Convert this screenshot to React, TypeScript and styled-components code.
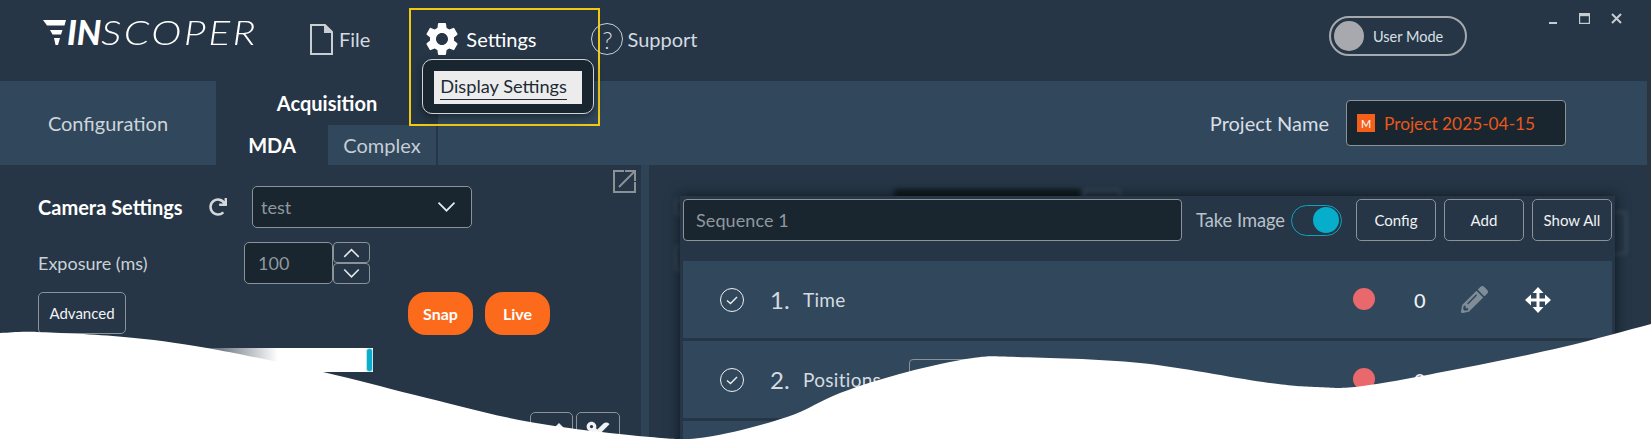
import * as React from "react";
import styled, { createGlobalStyle } from "styled-components";
import { FaPencilAlt, FaCut, FaArrowUp, FaRedo } from "react-icons/fa";
import { MdSettings } from "react-icons/md";

const Global = createGlobalStyle`
  html, body {
    margin: 0;
    padding: 0;
    background: #fff;
  }
  * {
    box-sizing: border-box;
  }
`;

const Frame = styled.div`
  position: relative;
  width: 1651px;
  height: 439px;
  overflow: hidden;
  background: #263646;
  color: #e4e8ec;
  font-family: Lato, "Liberation Sans", sans-serif;
  display: flex;
  flex-direction: column;
`;

const TitleBar = styled.div`
  height: 81px;
  flex: none;
  display: flex;
  align-items: center;
  padding-left: 43px;
`;

const Logo = styled.div`
  width: 214px;
  display: flex;
  align-items: center;
  margin-top: -17px;
  font-style: italic;
  font-size: 34px;
  line-height: 34px;
  color: #fff;
  svg {
    flex: none;
    margin-right: 1px;
  }
`;

const LogoBold = styled.span`
  font-weight: 900;
`;

const LogoThin = styled.span`
  display: inline-block;
  font-weight: 300;
  letter-spacing: 2px;
  transform: scaleX(1.2);
  transform-origin: left center;
`;

const NavItem = styled.div<{ $left: number; $gap: number; $bright?: boolean }>`
  position: relative;
  display: flex;
  align-items: center;
  gap: ${(p) => p.$gap}px;
  margin-left: ${(p) => p.$left}px;
  font-size: 20px;
  color: ${(p) => (p.$bright ? "#fff" : "#d4dae0")};
  margin-top: -3px;
`;

const HelpCircle = styled.span`
  width: 32px;
  height: 32px;
  border: 1px solid #c9d0d6;
  border-radius: 50%;
  display: flex;
  align-items: center;
  justify-content: center;
  font-size: 24px;
  font-weight: 300;
`;

const Highlight = styled.div`
  position: absolute;
  left: -13px;
  top: -11px;
  width: 191px;
  height: 118px;
  border: 2px solid #f0c913;
  pointer-events: none;
`;

const Dropdown = styled.div`
  position: absolute;
  left: 0;
  top: 40px;
  width: 172px;
  height: 55px;
  padding: 11px;
  background: #19252f;
  border: 1px solid #cfd4d8;
  border-radius: 10px;
  box-shadow: 0 3px 8px rgba(0, 0, 0, 0.45);
`;

const DropdownItem = styled.div`
  height: 33px;
  background: #ececec;
  color: #1d2a36;
  font-size: 18.2px;
  line-height: 30px;
  padding: 0 0 0 6px;
  span {
    display: inline-block;
    line-height: 26px;
    margin-top: 1px;
    border-bottom: 1px solid #1d2a36;
  }
`;

const UserMode = styled.div`
  width: 138px;
  height: 40px;
  margin-left: auto;
  margin-right: 184px;
  margin-top: -9px;
  border: 2px solid #a5a9ae;
  border-radius: 20px;
  display: flex;
  align-items: center;
  gap: 9px;
  padding-left: 3px;
  font-size: 14.5px;
  color: #d7e0e8;
`;

const UserKnob = styled.span`
  width: 30px;
  height: 30px;
  border-radius: 50%;
  background: #a8a9ae;
`;

const WindowControls = styled.div`
  position: absolute;
  top: 13px;
  right: 29px;
  display: flex;
  align-items: flex-start;
  gap: 21px;
  svg {
    display: block;
  }
`;

const TabBar = styled.div`
  height: 84px;
  flex: none;
  background: #31475b;
  display: flex;
`;

const ConfigTab = styled.div`
  width: 216px;
  display: flex;
  align-items: center;
  justify-content: center;
  font-size: 20px;
  color: #cdd5dc;
`;

const AcquisitionBlock = styled.div`
  width: 222px;
  background: #263646;
  display: flex;
  flex-direction: column;
`;

const AcquisitionTitle = styled.div`
  height: 44px;
  padding: 10px 0 0 0;
  text-align: center;
  font-size: 20px;
  font-weight: 700;
  color: #fff;
`;

const SubTabs = styled.div`
  height: 40px;
  display: flex;
`;

const SubTab = styled.div<{ $active?: boolean; $width: number }>`
  width: ${(p) => p.$width}px;
  display: flex;
  align-items: center;
  justify-content: center;
  font-size: 20px;
  font-weight: ${(p) => (p.$active ? 700 : 400)};
  color: ${(p) => (p.$active ? "#fff" : "#c5ced6")};
  background: ${(p) => (p.$active ? "transparent" : "#31475b")};
`;

const ProjectArea = styled.div`
  margin-left: auto;
  padding-right: 85px;
  display: flex;
  align-items: center;
  gap: 17px;
  font-size: 20px;
  color: #d7dfe6;
`;

const ProjectInput = styled.div`
  width: 220px;
  height: 46px;
  background: #19252f;
  border: 1px solid #8b9298;
  border-radius: 4px;
  display: flex;
  align-items: center;
  gap: 9px;
  padding-left: 10px;
  color: #e8581a;
  font-size: 17.3px;
`;

const ProjectBadge = styled.span`
  width: 18px;
  height: 18px;
  background: #f4601a;
  color: #fff;
  font-size: 11px;
  display: flex;
  align-items: center;
  justify-content: center;
`;

const Body = styled.div`
  flex: 1;
  display: flex;
`;

const LeftPanel = styled.div`
  position: relative;
  width: 641px;
  padding: 21px 0 0 38px;
`;

const ExpandButton = styled.div`
  position: absolute;
  top: 5px;
  right: 5px;
  svg {
    display: block;
  }
`;

const CameraRow = styled.div`
  height: 42px;
  display: flex;
  align-items: center;
`;

const SectionTitle = styled.div`
  width: 171px;
  font-size: 20px;
  font-weight: 700;
  color: #fff;
`;

const RefreshIcon = styled.span`
  display: flex;
  width: 43px;
  color: #d4d8dc;
  font-size: 18px;
`;

const SelectBox = styled.div`
  width: 220px;
  height: 42px;
  background: #19252f;
  border: 1px solid #8b9298;
  border-radius: 5px;
  display: flex;
  align-items: center;
  justify-content: space-between;
  padding: 0 14px 0 8px;
  color: #8f989f;
  font-size: 18px;
`;

const ExposureRow = styled.div`
  height: 42px;
  margin-top: 14px;
  display: flex;
  align-items: center;
`;

const FieldLabel = styled.div`
  width: 206px;
  font-size: 18px;
  color: #c9d1d8;
`;

const NumberBox = styled.div`
  width: 89px;
  height: 42px;
  background: #19252f;
  border: 1px solid #8b9298;
  border-radius: 5px;
  display: flex;
  align-items: center;
  padding-left: 13px;
  color: #8f989f;
  font-size: 18px;
`;

const Stepper = styled.div`
  width: 37px;
  height: 42px;
  display: flex;
  flex-direction: column;
`;

const StepButton = styled.div`
  flex: 1;
  border: 1px solid #8b9298;
  border-radius: 4px;
  display: flex;
  align-items: center;
  justify-content: center;
`;

const ActionRow = styled.div`
  height: 43px;
  margin-top: 8px;
  display: flex;
`;

const OutlineButton = styled.div<{ $width: number }>`
  width: ${(p) => p.$width}px;
  height: 42px;
  flex: none;
  border: 1px solid #8b9298;
  border-radius: 5px;
  display: flex;
  align-items: center;
  justify-content: center;
  color: #f0f2f4;
  font-size: 15px;
`;

const SnapGroup = styled.div`
  display: flex;
  gap: 12px;
  margin-left: 282px;
`;

const OrangeButton = styled.div`
  width: 65px;
  height: 43px;
  border-radius: 18px;
  background: #fc6a1c;
  color: #fff;
  font-weight: 700;
  font-size: 16px;
  display: flex;
  align-items: center;
  justify-content: center;
`;

const LevelRow = styled.div`
  position: relative;
  height: 24px;
  margin: 13px 0 0 152px;
  width: 183px;
  background: linear-gradient(90deg, rgba(255, 255, 255, 0), #fff 48%);
`;

const LevelHandle = styled.span`
  position: absolute;
  right: 0;
  top: 0;
  width: 7px;
  height: 24px;
  background: #08aecb;
  border: 1px solid #bfe6ee;
  border-radius: 3px;
`;

const ToolRow = styled.div`
  display: flex;
  gap: 3px;
  margin: 40px 0 0 492px;
`;

const ToolGlyph = styled.span`
  display: flex;
  margin-left: 14px;
  font-size: 22px;
`;

const Divider = styled.div`
  width: 8px;
  background: #2e4356;
`;

const RightPanel = styled.div`
  position: relative;
  flex: 1;
  padding: 31px 0 0 31px;
`;

// dim, out of focus window that lies behind the sequence panel
const GhostBox = styled.div<{ $x: number; $y: number; $w: number; $h: number; $dark?: boolean }>`
  position: absolute;
  left: ${(p) => p.$x}px;
  top: ${(p) => p.$y}px;
  width: ${(p) => p.$w}px;
  height: ${(p) => p.$h}px;
  background: ${(p) => (p.$dark ? "#10191f" : "transparent")};
  border: ${(p) => (p.$dark ? "none" : "2px solid #42505c")};
  border-radius: 4px;
  filter: blur(2px);
`;

const SequencePanel = styled.div`
  position: relative;
  width: 935px;
  padding: 3px 3px 0;
  background: #263646;
  box-shadow: 0 0 12px rgba(8, 14, 20, 0.8);
`;

const SequenceHeader = styled.div`
  display: flex;
  align-items: center;
  height: 42px;
  margin-bottom: 20px;
`;

const SequenceInput = styled.div`
  width: 499px;
  height: 42px;
  background: #19252f;
  border: 1px solid #8b9298;
  border-radius: 4px;
  display: flex;
  align-items: center;
  padding-left: 12px;
  color: #8f989f;
  font-size: 18px;
  letter-spacing: 0.1px;
`;

const TakeLabel = styled.div`
  margin-left: 14px;
  width: 95px;
  font-size: 18.3px;
  color: #b9c2ca;
`;

const Toggle = styled.div`
  width: 51px;
  height: 31px;
  border: 1px solid #08a5c0;
  border-radius: 16px;
  display: flex;
  justify-content: flex-end;
  align-items: center;
  padding-right: 2px;
  margin-right: 14px;
`;

const ToggleKnob = styled.span`
  width: 26px;
  height: 26px;
  border-radius: 50%;
  background: #06aecb;
`;

const HeaderButtons = styled.div`
  display: flex;
  gap: 8px;
`;

const StepList = styled.div`
  display: flex;
  flex-direction: column;
  gap: 3px;
`;

const StepRow = styled.div`
  height: 77px;
  background: #31475b;
  display: flex;
  align-items: center;
  padding-left: 37px;
  color: #d5dbe0;
`;

const StepNumber = styled.span`
  margin-left: 26px;
  width: 33px;
  font-size: 24px;
`;

const StepName = styled.span`
  width: 550px;
  font-size: 19px;
  letter-spacing: 0.3px;
`;

const StatusDot = styled.span`
  width: 22px;
  height: 22px;
  border-radius: 50%;
  background: #e9686b;
  margin-left: auto;
  position: relative;
  top: -1px;
`;

const StepCount = styled.span`
  width: 12px;
  margin-left: 39px;
  font-size: 20px;
  font-weight: 500;
  color: #eef1f3;
`;

const PencilIcon = styled.span`
  display: flex;
  margin-left: 35px;
  color: #7f8d98;
  font-size: 27px;
`;

const MoveIcon = styled.span`
  display: flex;
  margin-left: 37px;
  margin-right: 61px;
`;

const PositionField = styled.div`
  position: absolute;
  left: 260px;
  top: 194px;
  width: 80px;
  height: 42px;
  border: 1px solid #8b9298;
  border-radius: 4px;
`;

const EdgeStrip = styled.div`
  position: absolute;
  right: 0;
  top: 10px;
  bottom: 0;
  width: 4px;
  background: #2a3540;
`;

const Wave = styled.svg`
  position: absolute;
  left: 0;
  top: 0;
  width: 1651px;
  height: 439px;
  pointer-events: none;
`;

const Chevron = ({ up, size = 18 }: { up?: boolean; size?: number }) => (
  <svg width={size} height={size * 0.6} viewBox="0 0 18 11" fill="none" stroke="#e6e9ec" strokeWidth="1.5">
    <path d={up ? "M2 9.5 9 2.5l7 7" : "M2 1.5l7 7 7-7"} />
  </svg>
);

const CheckCircle = () => (
  <svg width="24" height="24" viewBox="0 0 24 24" fill="none" stroke="#eef1f3" strokeWidth="1">
    <circle cx="12" cy="12" r="11.500" />
    <path d="M7 12.500l3.500 3L17 9" strokeWidth="1.400" />
  </svg>
);

const MoveGlyph = () => (
  <svg width="26" height="26" viewBox="0 0 26 26" fill="#fff">
    <path d="M11.500 4h3v7.500H22v3h-7.500V22h-3v-7.500H4v-3h7.500z" />
    <path d="M13 0l5.500 6h-11zM13 26l-5.500-6h11zM0 13l6-5.500v11zM26 13l-6 5.500v-11z" />
  </svg>
);

// outline of the white torn edge, joined smoothly through these points
const waveEdge: [number, number][] = [
  [-40, 334], [0, 333], [37, 332], [124, 337], [207, 348], [323, 372], [415, 395], [530, 422],
  [650, 437], [707, 437], [787, 417], [840, 393], [907, 372], [973, 358], [1017, 357],
  [1140, 363], [1263, 382], [1317, 387], [1363, 386], [1463, 368], [1563, 347], [1651, 324], [1700, 311],
];

const wavePath = () => {
  let d = `M${waveEdge[0][0]} ${waveEdge[0][1]}`;
  for (let i = 0; i < waveEdge.length - 1; i++) {
    const p0 = waveEdge[Math.max(i - 1, 0)];
    const p1 = waveEdge[i];
    const p2 = waveEdge[i + 1];
    const p3 = waveEdge[Math.min(i + 2, waveEdge.length - 1)];
    const c1 = [p1[0] + (p2[0] - p0[0]) / 6, p1[1] + (p2[1] - p0[1]) / 6];
    const c2 = [p2[0] - (p3[0] - p1[0]) / 6, p2[1] - (p3[1] - p1[1]) / 6];
    d += `C${c1[0]} ${c1[1]} ${c2[0]} ${c2[1]} ${p2[0]} ${p2[1]}`;
  }
  return d + "V460H-40Z";
};

const sequenceSteps = ["Time", "Positions"];

export default function App() {
  return (
    <Frame>
      <Global />
      <TitleBar>
        <Logo>
          <svg width="23" height="25" viewBox="0 0 23 25" fill="#fff">
            <path d="M0 0h23l-1.500 5.500H4z" />
            <path d="M7 10h12.500l-1.500 4.500H9.500z" />
            <path d="M11 18h6l-2 7h-2.500z" />
          </svg>
          <LogoBold>IN</LogoBold>
          <LogoThin>SCOPER</LogoThin>
        </Logo>
        <NavItem $left={53} $gap={6}>
          <svg width="23" height="31" viewBox="0 0 23 31" fill="none" stroke="#c9ced3" strokeWidth="2">
            <path d="M1 1h14l7 7v22H1z" />
            <path d="M15 1v7h7" fill="#c9ced3" />
          </svg>
          File
        </NavItem>
        <NavItem $left={52} $gap={4} $bright>
          <MdSettings size={40} color="#fff" />
          Settings
          <Highlight />
          <Dropdown>
            <DropdownItem>
              <span>Display Settings</span>
            </DropdownItem>
          </Dropdown>
        </NavItem>
        <NavItem $left={55} $gap={4}>
          <HelpCircle>?</HelpCircle>
          Support
        </NavItem>
        <UserMode>
          <UserKnob />
          User Mode
        </UserMode>
        <WindowControls>
          <svg width="10" height="12" viewBox="0 0 10 12" fill="#c5ccd2">
            <rect x="1" y="9" width="8" height="2" />
          </svg>
          <svg width="11" height="11" viewBox="0 0 11 11" fill="none" stroke="#c5ccd2" strokeWidth="1.200">
            <rect x="0.6" y="0.6" width="9.800" height="9.800" />
            <rect x="0.6" y="0.6" width="9.800" height="2" fill="#c5ccd2" />
          </svg>
          <svg width="11" height="11" viewBox="0 0 11 11" stroke="#c5ccd2" strokeWidth="2">
            <path d="M1 1l9 9M10 1l-9 9" />
          </svg>
        </WindowControls>
      </TitleBar>

      <TabBar>
        <ConfigTab>Configuration</ConfigTab>
        <AcquisitionBlock>
          <AcquisitionTitle>Acquisition</AcquisitionTitle>
          <SubTabs>
            <SubTab $active $width={112}>MDA</SubTab>
            <SubTab $width={108}>Complex</SubTab>
          </SubTabs>
        </AcquisitionBlock>
        <ProjectArea>
          Project Name
          <ProjectInput>
            <ProjectBadge>M</ProjectBadge>
            Project 2025-04-15
          </ProjectInput>
        </ProjectArea>
      </TabBar>

      <Body>
        <LeftPanel>
          <ExpandButton>
            <svg width="23" height="23" viewBox="0 0 23 23" fill="none" stroke="#8a9197" strokeWidth="2">
              <path d="M11 1H1v21h21V12" />
              <path d="M6 17 21 2M12 1h10v10" />
            </svg>
          </ExpandButton>
          <CameraRow>
            <SectionTitle>Camera Settings</SectionTitle>
            <RefreshIcon>
              <FaRedo />
            </RefreshIcon>
            <SelectBox>
              test
              <Chevron size={21} />
            </SelectBox>
          </CameraRow>
          <ExposureRow>
            <FieldLabel>Exposure (ms)</FieldLabel>
            <NumberBox>100</NumberBox>
            <Stepper>
              <StepButton>
                <Chevron up size={19} />
              </StepButton>
              <StepButton>
                <Chevron size={19} />
              </StepButton>
            </Stepper>
          </ExposureRow>
          <ActionRow>
            <OutlineButton $width={88}>Advanced</OutlineButton>
            <SnapGroup>
              <OrangeButton>Snap</OrangeButton>
              <OrangeButton>Live</OrangeButton>
            </SnapGroup>
          </ActionRow>
          <LevelRow>
            <LevelHandle />
          </LevelRow>
          <ToolRow>
            <OutlineButton $width={43}>
              <ToolGlyph>
                <FaArrowUp />
              </ToolGlyph>
            </OutlineButton>
            <OutlineButton $width={44}>
              <FaCut size={26} />
            </OutlineButton>
          </ToolRow>
        </LeftPanel>
        <Divider />
        <RightPanel>
          <GhostBox $x={245} $y={24} $w={187} $h={40} $dark />
          <GhostBox $x={434} $y={24} $w={38} $h={30} />
          <GhostBox $x={26} $y={34} $w={20} $h={16} />
          <GhostBox $x={26} $y={80} $w={20} $h={26} />
          <GhostBox $x={950} $y={46} $w={28} $h={44} />
          <SequencePanel>
            <SequenceHeader>
              <SequenceInput>Sequence 1</SequenceInput>
              <TakeLabel>Take Image</TakeLabel>
              <Toggle>
                <ToggleKnob />
              </Toggle>
              <HeaderButtons>
                <OutlineButton $width={80}>Config</OutlineButton>
                <OutlineButton $width={80}>Add</OutlineButton>
                <OutlineButton $width={80}>Show All</OutlineButton>
              </HeaderButtons>
            </SequenceHeader>
            <StepList>
              {sequenceSteps.map((name, i) => (
                <StepRow key={name}>
                  <CheckCircle />
                  <StepNumber>{i + 1}.</StepNumber>
                  <StepName>{name}</StepName>
                  <StatusDot />
                  <StepCount>0</StepCount>
                  <PencilIcon>
                    <FaPencilAlt />
                  </PencilIcon>
                  <MoveIcon>
                    <MoveGlyph />
                  </MoveIcon>
                </StepRow>
              ))}
              <StepRow />
            </StepList>
          </SequencePanel>
          <PositionField />
        </RightPanel>
      </Body>
      <EdgeStrip />

      <Wave viewBox="0 0 1651 439">
        <path fill="#fff" d={wavePath()} />
      </Wave>
    </Frame>
  );
}
